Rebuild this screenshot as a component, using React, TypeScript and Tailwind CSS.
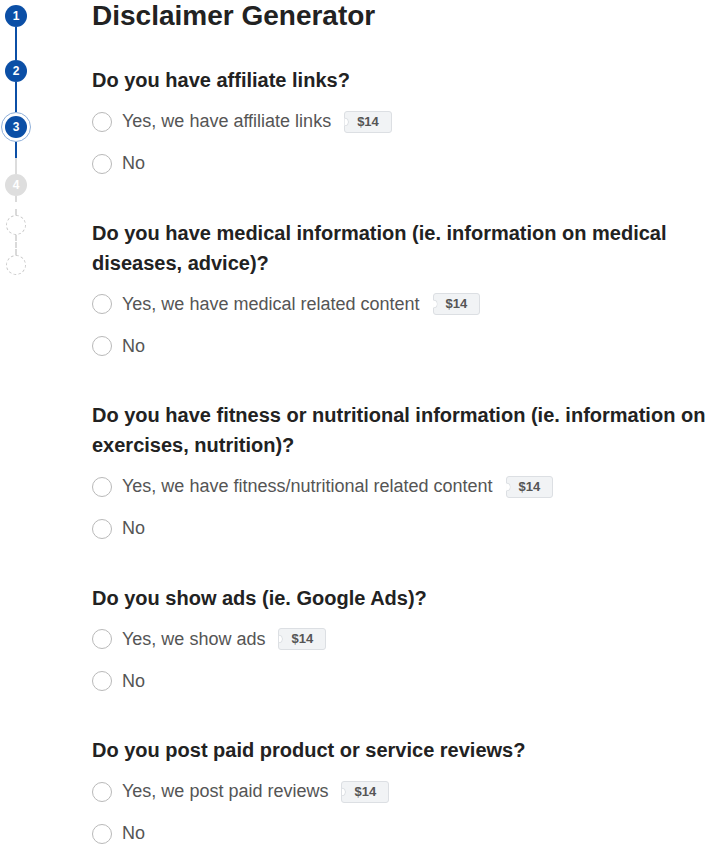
const questions = [
  {
    q: "Do you have affiliate links?",
    yes: "Yes, we have affiliate links",
  },
  {
    q: "Do you have medical information (ie. information on medical diseases, advice)?",
    yes: "Yes, we have medical related content",
  },
  {
    q: "Do you have fitness or nutritional information (ie. information on exercises, nutrition)?",
    yes: "Yes, we have fitness/nutritional related content",
  },
  {
    q: "Do you show ads (ie. Google Ads)?",
    yes: "Yes, we show ads",
  },
  {
    q: "Do you post paid product or service reviews?",
    yes: "Yes, we post paid reviews",
  },
];

function Stepper() {
  const done = "flex h-[22px] w-[22px] items-center justify-center rounded-full bg-[#0b4fa6] text-[12px] font-bold text-white";
  return (
    <div className="flex w-[32px] flex-col items-center pt-[5px]">
      <span className={done}>1</span>
      <span className="h-[33px] w-[2px] bg-[#0b4fa6]" />
      <span className={done}>2</span>
      <span className="h-[30px] w-[2px] bg-[#0b4fa6]" />
      <span className="flex h-[30px] w-[30px] items-center justify-center rounded-full border border-[#8fb0da]">
        <span className={done}>3</span>
      </span>
      <span className="h-[16px] w-[2px] bg-[#0b4fa6]" />
      <span className="h-[16px] w-[2px] bg-[#dcdcdc]" />
      <span className="flex h-[22px] w-[22px] items-center justify-center rounded-full bg-[#dedede] text-[12px] font-bold text-white">
        4
      </span>
      <span className="h-[19px] border-l-2 border-dashed border-[#dadada]" />
      <span className="h-[20px] w-[20px] rounded-full border border-dashed border-[#c8c8c8]" />
      <span className="h-[20px] border-l-2 border-dashed border-[#dadada]" />
      <span className="h-[20px] w-[20px] rounded-full border border-dashed border-[#c8c8c8]" />
    </div>
  );
}

function Price() {
  return (
    <span className="relative ml-[13px] flex h-[22px] items-center rounded-[3px] border border-[#dcdfe3] bg-[#f1f3f5] px-[12px] text-[13px] font-bold text-[#555]">
      <span className="absolute left-[-5px] top-1/2 h-[9px] w-[9px] -translate-y-1/2 rounded-full border border-[#dcdfe3] bg-white [clip-path:inset(0_0_0_50%)]" />
      $14
    </span>
  );
}

function Option({ label, price }: { label: string; price?: boolean }) {
  return (
    <label className="flex h-[42px] items-center">
      <span className="h-[20px] w-[20px] shrink-0 rounded-full border border-[#b9b9b9] bg-white" />
      <span className="ml-[10px] text-[18px] text-[#555]">{label}</span>
      {price && <Price />}
    </label>
  );
}

export default function App() {
  return (
    <div className="flex bg-white font-['Liberation_Sans',Arial,sans-serif] text-[#222]">
      <Stepper />
      <div className="ml-[60px] flex-1">
        <h1 className="text-[28px] font-bold leading-[32px]">Disclaimer Generator</h1>
        {questions.map((item, i) => (
          <section key={i} className="mt-[33px]">
            <h2 className="text-[20px] font-bold leading-[30px]">{item.q}</h2>
            <div className="mt-[5.5px]">
              <Option label={item.yes} price />
              <Option label="No" />
            </div>
          </section>
        ))}
      </div>
    </div>
  );
}
